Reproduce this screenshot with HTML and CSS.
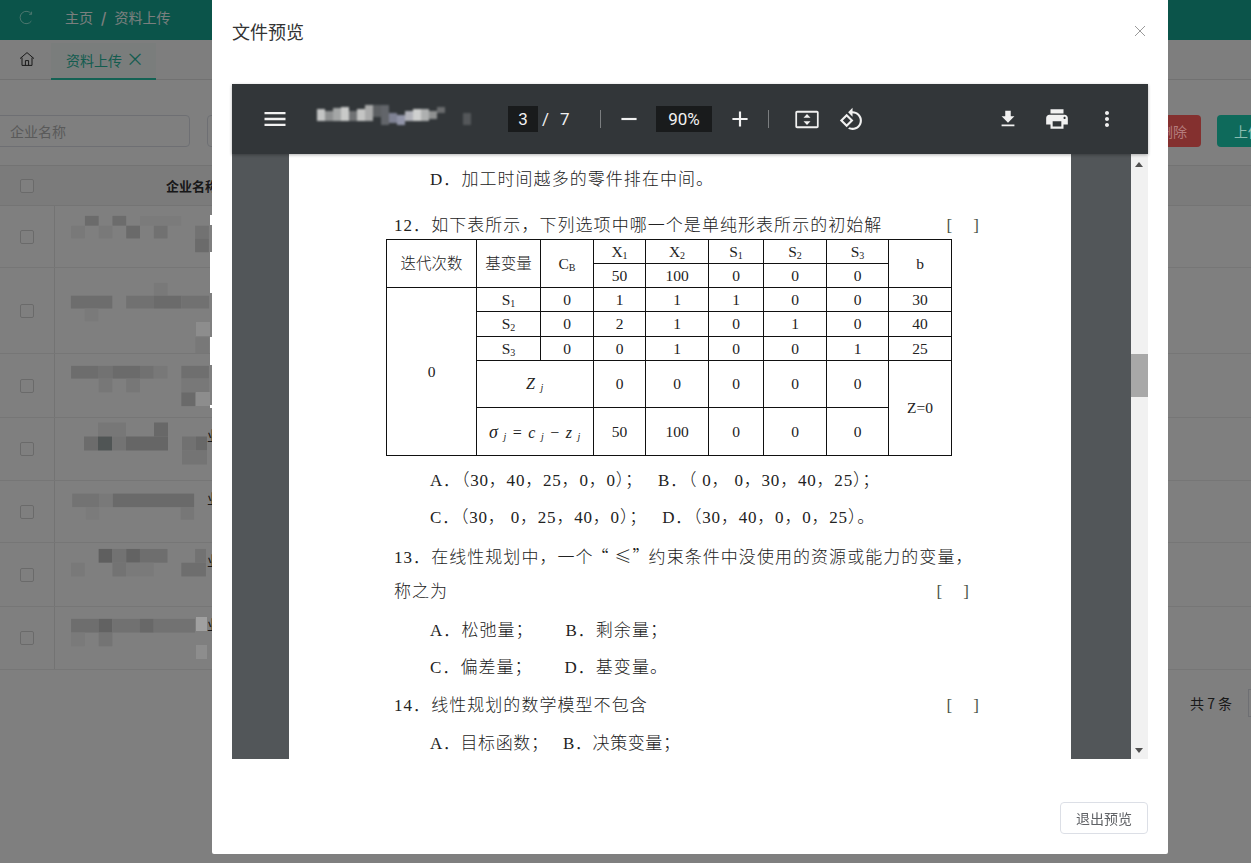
FILE: index.html
```html
<!DOCTYPE html>
<html lang="zh-CN">
<head>
  <meta charset="UTF-8">
  <title>资料上传</title>
  <link rel="stylesheet" href="styles.css">
</head>
<body>

  <!-- Page behind the dialog -->
  <div class="app">
    <header class="topbar">
      <svg class="refresh" viewBox="0 0 16 16"><path d="M13.2 4.2A6.6 6.6 0 1 0 13.2 11.8" fill="none" stroke="currentColor" stroke-width="1"/><path d="M13.4 1.8v2.8h-2.6" fill="none" stroke="currentColor" stroke-width="1"/></svg>
      <span class="crumb">主页</span>
      <span class="crumb-sep">/</span>
      <span class="crumb">资料上传</span>
    </header>

    <nav class="tabs">
      <svg class="home" viewBox="0 0 16 16"><path d="M1 7.6 8 1.6l7 6M3 6.6V14.4h10V6.6M6.4 14.4V9.6h3.2v4.8" fill="none" stroke="currentColor" stroke-width="1"/></svg>
      <div class="tab">资料上传<span class="tab-close">×</span></div>
    </nav>

    <div class="filters">
      <div class="field">企业名称</div>
      <div class="field field-next"></div>
      <div class="filter-btns">
        <div class="btn btn-red">删除</div>
        <div class="btn btn-green">上传</div>
      </div>
    </div>

    <div class="grid">
      <div class="grid-head">
        <div class="cell-check"><span class="check"></span></div>
        <div class="head-name">企业名称</div>
      </div>
      <!-- names are pixelated in the screenshot -->
      <div class="grid-row row-a">
        <div class="cell-check"><span class="check"></span></div>
        <svg class="mosaic" viewBox="0 0 140 62"><rect x="14" y="10" width="14" height="10" fill="#d6d6d6"/><rect x="42" y="10" width="14" height="10" fill="#d8d8d8"/><rect x="70" y="10" width="42" height="10" fill="#f6f6f6"/><rect y="20" width="14" height="13" fill="#f2f2f2"/><rect x="28" y="20" width="14" height="13" fill="#f2f2f2"/><rect x="56" y="20" width="14" height="13" fill="#d4d4d4"/><rect x="84" y="20" width="14" height="13" fill="#e2e2e2"/><rect x="126" y="20" width="14" height="13" fill="#e4e4e4"/><rect x="126" y="33" width="14" height="14" fill="#d6d6d6"/></svg>
      </div>
      <div class="grid-row row-b">
        <div class="cell-check"><span class="check"></span></div>
        <svg class="mosaic" viewBox="0 0 140 86"><rect x="84" y="15" width="14" height="13" fill="#f2f2f2"/><rect y="28" width="42" height="13" fill="#dadada"/><rect x="56" y="28" width="28" height="13" fill="#e2e2e2"/><rect x="84" y="28" width="28" height="13" fill="#d6d6d6"/><rect x="112" y="28" width="28" height="13" fill="#e2e2e2"/><rect x="14" y="41" width="14" height="13" fill="#f4f4f4"/><rect x="126" y="70" width="14" height="16" fill="#f0f0f0"/></svg>
      </div>
      <div class="grid-row row-c">
        <div class="cell-check"><span class="check"></span></div>
        <svg class="mosaic" viewBox="0 0 140 64"><rect y="12" width="28" height="13" fill="#dadada"/><rect x="28" y="12" width="14" height="13" fill="#e4e4e4"/><rect x="42" y="12" width="28" height="13" fill="#d6d6d6"/><rect x="70" y="12" width="14" height="13" fill="#e2e2e2"/><rect x="84" y="12" width="14" height="13" fill="#f0f0f0"/><rect x="112" y="12" width="28" height="13" fill="#dedede"/><rect x="28" y="25" width="14" height="14" fill="#eeeeee"/><rect x="56" y="25" width="14" height="14" fill="#eeeeee"/><rect x="112" y="25" width="28" height="14" fill="#f0f0f0"/><rect x="112" y="39" width="14" height="14" fill="#d4d4d4"/></svg>
      </div>
      <div class="grid-row row-d">
        <div class="cell-check"><span class="check"></span></div>
        <svg class="mosaic mosaic-cut" viewBox="0 0 137 61"><rect x="28" y="4" width="28" height="14" fill="#eeeeee"/><rect x="84" y="4" width="14" height="14" fill="#d0d0d0"/><rect x="14" y="18" width="14" height="14" fill="#d8d8d8"/><rect x="28" y="18" width="14" height="14" fill="#a0aaaa"/><rect x="42" y="18" width="14" height="14" fill="#e6e6e6"/><rect x="56" y="18" width="42" height="14" fill="#cccccc"/><rect x="112" y="18" width="14" height="14" fill="#e2e2e2"/><rect x="126" y="18" width="11" height="14" fill="#d0d0d0"/><rect x="112" y="32" width="25" height="14" fill="#e8e8e8"/></svg>
        <span class="name-tail">业</span>
      </div>
      <div class="grid-row row-e">
        <div class="cell-check"><span class="check"></span></div>
        <svg class="mosaic mosaic-cut" viewBox="0 0 137 63"><rect y="13" width="28" height="14" fill="#e6e6e6"/><rect x="28" y="13" width="14" height="14" fill="#f2f2f2"/><rect x="42" y="13" width="84" height="14" fill="#d4d4d4"/><rect x="14" y="27" width="14" height="13" fill="#f6f6f6"/><rect x="112" y="27" width="14" height="13" fill="#eeeeee"/></svg>
        <span class="name-tail">业</span>
      </div>
      <div class="grid-row row-f">
        <div class="cell-check"><span class="check"></span></div>
        <svg class="mosaic mosaic-cut" viewBox="0 0 137 64"><rect x="28" y="6" width="14" height="14" fill="#bebebe"/><rect x="42" y="6" width="14" height="14" fill="#e4e4e4"/><rect x="56" y="6" width="14" height="14" fill="#c6c6c6"/><rect x="70" y="6" width="28" height="14" fill="#dcdcdc"/><rect x="126" y="6" width="11" height="14" fill="#e4e4e4"/><rect y="20" width="14" height="14" fill="#f2f2f2"/><rect x="42" y="20" width="14" height="14" fill="#e6e6e6"/><rect x="56" y="20" width="28" height="14" fill="#f4f4f4"/><rect x="112" y="20" width="25" height="14" fill="#dcdcdc"/></svg>
        <span class="name-tail">业</span>
      </div>
      <div class="grid-row row-d">
        <div class="cell-check"><span class="check"></span></div>
        <svg class="mosaic mosaic-cut" viewBox="0 0 137 63"><rect y="12" width="28" height="14" fill="#dcdcdc"/><rect x="28" y="12" width="14" height="14" fill="#c4c4c4"/><rect x="42" y="12" width="28" height="14" fill="#e2e2e2"/><rect x="70" y="12" width="14" height="14" fill="#d0d0d0"/><rect x="84" y="12" width="42" height="14" fill="#e4e4e4"/><rect y="26" width="14" height="14" fill="#f4f4f4"/><rect x="28" y="26" width="14" height="14" fill="#e8e8e8"/></svg>
        <span class="name-tail">业</span>
      </div>
    </div>

    <div class="pager">
      <span>共 7 条</span>
      <span class="pager-box"></span>
    </div>
  </div>

  <!-- Bits of the redaction that are lighter than the dim layer -->
  <div class="bit sliver sliver-a"></div>
  <div class="bit sliver sliver-b"></div>
  <div class="bit sliver sliver-c"></div>
  <div class="bit sliver sliver-d"></div>
  <div class="bit patch patch-a"></div>
  <div class="bit patch patch-b"></div>
  <div class="bit patch patch-c"></div>
  <div class="bit patch patch-d"></div>

  <div class="mask"></div>

  <!-- Dialog: file preview -->
  <section class="dialog">
    <div class="dialog-head">
      <h2 class="dialog-title">文件预览</h2>
      <svg class="dialog-close" viewBox="0 0 12 12"><path d="M1 1l10 10M11 1L1 11" fill="none" stroke="currentColor" stroke-width="1"/></svg>
    </div>

    <div class="viewer">
      <div class="pdf-bar">
        <svg class="ico ico-menu" viewBox="0 0 24 24"><path d="M3 18h18v-2H3v2zm0-5h18v-2H3v2zm0-7v2h18V6H3z"/></svg>
        <svg class="pdf-name" viewBox="0 0 154 32"><rect x="0" y="6" width="8" height="12" fill="#c3c4c4"/><rect x="8" y="8" width="8" height="10" fill="#8d8f90"/><rect x="16" y="5" width="8" height="13" fill="#a4a6a6"/><rect x="24" y="4" width="8" height="14" fill="#c9cac9"/><rect x="32" y="8" width="8" height="10" fill="#707274"/><rect x="40" y="6" width="8" height="12" fill="#c4c5c4"/><rect x="48" y="2" width="8" height="16" fill="#a9aaaa"/><rect x="56" y="2" width="8" height="12" fill="#5c5f62"/><rect x="64" y="2" width="8" height="20" fill="#62656a"/><rect x="72" y="10" width="8" height="10" fill="#7f8294"/><rect x="80" y="12" width="8" height="10" fill="#9194a8"/><rect x="88" y="8" width="8" height="10" fill="#b0b1b8"/><rect x="96" y="6" width="8" height="12" fill="#cfd0cf"/><rect x="104" y="6" width="8" height="12" fill="#aeb0b0"/><rect x="112" y="8" width="8" height="8" fill="#8e9090"/><rect x="120" y="4" width="8" height="6" fill="#6a6c6e"/><rect x="146" y="10" width="8" height="12" fill="#54575a"/></svg>
        <span class="num-box page-box">3</span>
        <span class="page-of">/</span>
        <span class="page-total">7</span>
        <span class="bar-sep sep-one"></span>
        <svg class="ico ico-minus" viewBox="0 0 24 24"><path d="M5 11h14v2H5z"/></svg>
        <span class="num-box zoom-box">90%</span>
        <svg class="ico ico-plus" viewBox="0 0 24 24"><path d="M19 13h-6v6h-2v-6H5v-2h6V5h2v6h6v2z"/></svg>
        <span class="bar-sep sep-two"></span>
        <svg class="ico ico-fit" viewBox="0 0 24 24"><path d="M3.5 5h17c.8 0 1.500.7 1.500 1.500v12c0 .8-.7 1.500-1.500 1.500h-17C2.700 20 2 19.300 2 18.500v-12C2 5.700 2.700 5 3.500 5zm0 1.700v11.600h17V6.700h-17zM12 7.800l3 3.200H9l3-3.200zm0 9.400L9 14h6l-3 3.200z"/></svg>
        <svg class="ico ico-rotate" viewBox="0 0 24 24"><path d="M7.340 6.410L.86 12.900l6.490 6.480 6.490-6.480-6.500-6.490zM3.690 12.900l3.660-3.660L11 12.900l-3.660 3.660-3.650-3.660zm15.670-6.260C17.610 4.880 15.300 4 13 4V.76L8.760 5 13 9.240V6c1.790 0 3.580.68 4.950 2.050 2.730 2.730 2.730 7.170 0 9.900C16.580 19.320 14.790 20 13 20c-.97 0-1.940-.21-2.840-.61l-1.490 1.490C10.020 21.620 11.510 22 13 22c2.300 0 4.610-.88 6.360-2.640 3.520-3.510 3.520-9.210 0-12.720z"/></svg>
        <span class="bar-fill"></span>
        <svg class="ico ico-down" viewBox="0 0 24 24"><path d="M19 9h-4V3H9v6H5l7 7 7-7zM5 18v2h14v-2H5z"/></svg>
        <svg class="ico ico-print" viewBox="0 0 24 24"><path d="M19 8H5c-1.660 0-3 1.340-3 3v6h4v4h12v-4h4v-6c0-1.660-1.340-3-3-3zm-3 11H8v-5h8v5zm3-7c-.55 0-1-.45-1-1s.45-1 1-1 1 .45 1 1-.45 1-1 1zm-1-9H6v4h12V3z"/></svg>
        <svg class="ico ico-more" viewBox="0 0 24 24"><path d="M12 8c1.100 0 2-.9 2-2s-.9-2-2-2-2 .9-2 2 .9 2 2 2zm0 2c-1.100 0-2 .9-2 2s.9 2 2 2 2-.9 2-2-.9-2-2-2zm0 6c-1.100 0-2 .9-2 2s.9 2 2 2 2-.9 2-2-.9-2-2-2z"/></svg>
      </div>

      <div class="pdf-body">
        <div class="pdf-gutter">
          <article class="pdf-page">
            <p class="line opt first">D．加工时间越多的零件排在中间。</p>
            <p class="line q q12"><span>12．如下表所示，下列选项中哪一个是单纯形表所示的初始解</span><span class="blank">[&nbsp;&nbsp;&nbsp;&nbsp;&nbsp;]</span></p>

            <table class="sheet">
              <colgroup>
                <col class="c1"><col class="c2"><col class="c3"><col class="c4"><col class="c5">
                <col class="c6"><col class="c7"><col class="c8"><col class="c9">
              </colgroup>
              <tr class="r24">
                <td rowspan="2">迭代次数</td><td rowspan="2">基变量</td><td rowspan="2">C<sub>B</sub></td>
                <td>X<sub>1</sub></td><td>X<sub>2</sub></td><td>S<sub>1</sub></td><td>S<sub>2</sub></td><td>S<sub>3</sub></td>
                <td rowspan="2">b</td>
              </tr>
              <tr class="r24"><td>50</td><td>100</td><td>0</td><td>0</td><td>0</td></tr>
              <tr class="r24">
                <td rowspan="5">0</td><td>S<sub>1</sub></td><td>0</td><td>1</td><td>1</td><td>1</td><td>0</td><td>0</td><td>30</td>
              </tr>
              <tr class="r25"><td>S<sub>2</sub></td><td>0</td><td>2</td><td>1</td><td>0</td><td>1</td><td>0</td><td>40</td></tr>
              <tr class="r24"><td>S<sub>3</sub></td><td>0</td><td>0</td><td>1</td><td>0</td><td>0</td><td>1</td><td>25</td></tr>
              <tr class="r47">
                <td colspan="2" class="math">Z <sub>j</sub></td><td>0</td><td>0</td><td>0</td><td>0</td><td>0</td>
                <td rowspan="2">Z=0</td>
              </tr>
              <tr class="r48">
                <td colspan="2" class="math"><b>σ</b> <sub>j</sub> = c <sub>j</sub> − z <sub>j</sub></td><td>50</td><td>100</td><td>0</td><td>0</td><td>0</td>
              </tr>
            </table>

            <p class="line opt nums after-sheet">A．（30，40，25，0，0）；&nbsp;&nbsp; B．（ 0， 0，30，40，25）；</p>
            <p class="line opt nums">C．（30， 0，25，40，0）；&nbsp;&nbsp; D．（30，40，0，0，25）。</p>
            <p class="line q q13">13．在线性规划中，一个<span class="cjk">“ ≤”</span>约束条件中没使用的资源或能力的变量，</p>
            <p class="line q q13b"><span>称之为</span><span class="blank blank-13">[&nbsp;&nbsp;&nbsp;&nbsp;&nbsp;]</span></p>
            <p class="line opt tall">A．松弛量；&nbsp;&nbsp;&nbsp;&nbsp;&nbsp; B．剩余量；</p>
            <p class="line opt">C．偏差量；&nbsp;&nbsp;&nbsp;&nbsp;&nbsp; D．基变量。</p>
            <p class="line q q14"><span>14．线性规划的数学模型不包含</span><span class="blank">[&nbsp;&nbsp;&nbsp;&nbsp;&nbsp;]</span></p>
            <p class="line opt q14b">A．目标函数；&nbsp;&nbsp; B．决策变量；</p>
          </article>
        </div>
        <div class="pdf-scroll">
          <span class="arrow arrow-up"></span>
          <span class="thumb"></span>
          <span class="arrow arrow-down"></span>
        </div>
      </div>
    </div>

    <div class="dialog-foot">
      <div class="btn-exit">退出预览</div>
    </div>
  </section>

</body>
</html>
```

FILE: styles.css
```css
/* Base */
html, body {
  margin: 0;
  height: 100%;
  overflow: hidden;
}

body {
  font-family: 'Noto Sans CJK SC', 'Liberation Sans', sans-serif;
  font-size: 14px;
  color: #606266;
  background-color: #fff;
}

/* Page behind the dialog */
.app {
  width: 1300px;
  height: 863px;
}

.topbar {
  height: 40px;
  background-color: #16a894;
  display: flex;
  align-items: center;
  gap: 8px;
  padding-left: 19px;
  padding-bottom: 6px;
  box-sizing: border-box;
}

.refresh {
  width: 15px;
  height: 15px;
  margin-right: 23px;
  color: #a0f0e0;
}

.crumb {
  color: #f4fffd;
}

.crumb-sep {
  color: #fff;
  font-weight: bold;
}

.tabs {
  height: 39px;
  border-bottom: 1px solid #e2e2e2;
  display: flex;
  align-items: flex-end;
  background-color: #fcfcfc;
}

.home {
  width: 16px;
  height: 16px;
  margin: 0 16px 12px 19px;
  color: #333;
}

.tab {
  width: 105px;
  height: 37px;
  box-sizing: border-box;
  padding: 4px 0 0 15px;
  border-bottom: 2px solid #28c4a8;
  background-color: #f4fbf9;
  color: #28b89e;
  line-height: 26px;
  margin-bottom: -1px;
}

.tab-close {
  font-size: 18px;
  margin-left: 4px;
  line-height: 16px;
}

.filters {
  display: flex;
  align-items: center;
  padding-top: 35px;
  margin-left: -12px;
  height: 32px;
  padding-bottom: 18px;
  border-bottom: 1px solid #e6e6e6;
}

.field {
  width: 202px;
  height: 32px;
  flex-shrink: 0;
  box-sizing: border-box;
  border: 1px solid #dcdfe6;
  border-radius: 4px;
  padding-left: 21px;
  line-height: 30px;
  color: #b4b4b4;
}

.field-next {
  margin-left: 17px;
}

.filter-btns {
  display: flex;
  gap: 16px;
  margin-left: 720px;
  flex-shrink: 0;
}

/* these two stay brighter than the dim layer would leave them */
.btn {
  width: 72px;
  height: 32px;
  box-sizing: border-box;
  border-radius: 4px;
  line-height: 32px;
  flex-shrink: 0;
  position: relative;
  z-index: 3;
}

.btn-red {
  background-color: #84302f;
  color: #b57d7d;
  padding-left: 30px;
}

.btn-green {
  background-color: #0e6a5b;
  color: #8cbcb0;
  padding-left: 17px;
}

/* Table */
.grid {
  width: 1251px;
  background-color: #fff;
}

.grid-head {
  height: 39px;
  display: flex;
  align-items: center;
  border-bottom: 1px solid #e8e8e8;
  background-color: #f7f7f7;
}

.cell-check {
  width: 54px;
  height: 100%;
  display: flex;
  align-items: center;
  justify-content: center;
  flex-shrink: 0;
  border-right: 1px solid #e6e6e6;
}

.grid-head .cell-check {
  border-right: none;
}

.check {
  width: 12px;
  height: 12px;
  border: 1px solid #d5d5d5;
  border-radius: 2px;
  background-color: #fff;
}

.head-name {
  margin-left: 112px;
  font-weight: bold;
  color: #303133;
  font-size: 13px;
  white-space: nowrap;
}

.grid-row {
  display: flex;
  border-bottom: 1px solid #ececec;
  box-sizing: border-box;
}

.row-a { height: 62px; }
.row-b { height: 86px; }
.row-c { height: 64px; }
.row-d { height: 63px; }
.row-e { height: 62px; }
.row-f { height: 64px; }

.mosaic {
  width: 140px;
  height: 100%;
  margin-left: 15px;
  flex-shrink: 0;
  filter: blur(0.5px);
}

.mosaic-cut {
  width: 137px;
}

.name-tail {
  margin-top: 9px;
  line-height: 16px;
  height: 16px;
  color: #303133;
}

.pager {
  display: flex;
  align-items: center;
  height: 30px;
  margin-top: 18px;
  padding-left: 1190px;
  gap: 16px;
  width: 110px;
  color: #333;
  white-space: nowrap;
}

.pager-box {
  width: 30px;
  height: 26px;
  border: 1px solid #dcdfe6;
  flex-shrink: 0;
}

/* Redaction bits */
.bit {
  position: fixed;
  z-index: 3;
}

.sliver {
  left: 210px;
  width: 2px;
  background-color: #fff;
}

.sliver-a { top: 215px; height: 10px; }
.sliver-b { top: 252px; height: 41px; }
.sliver-c { top: 337px; height: 28px; }
.sliver-d { top: 405px; height: 3px; }

.patch {
  left: 196px;
  width: 14px;
  height: 14px;
  background-color: #8d8d8d;
}

.patch-a { top: 322px; }
.patch-b { top: 392px; }
.patch-c { top: 617px; width: 11px; background-color: #a0a0a0; }
.patch-d { top: 645px; width: 11px; }

/* Dimmed layer */
.mask {
  position: fixed;
  inset: 0;
  background-color: rgba(0, 0, 0, 0.5);
  z-index: 2;
}

/* Dialog */
.dialog {
  position: fixed;
  left: 212px;
  top: 0;
  width: 956px;
  height: 854px;
  box-sizing: border-box;
  padding: 0 20px;
  background-color: #fff;
  border-radius: 0 0 2px 2px;
  z-index: 4;
  display: flex;
  flex-direction: column;
}

.dialog-head {
  height: 84px;
  display: flex;
  justify-content: space-between;
  flex-shrink: 0;
}

.dialog-title {
  margin: 19px 0 0;
  font-size: 18px;
  font-weight: normal;
  line-height: 24px;
  color: #333;
}

.dialog-close {
  width: 12px;
  height: 12px;
  margin-top: 25px;
  margin-right: 2px;
  color: #9a9a9a;
}

.viewer {
  height: 675px;
  display: flex;
  flex-direction: column;
  flex-shrink: 0;
}

/* PDF toolbar */
.pdf-bar {
  height: 70px;
  flex-shrink: 0;
  background-color: #323639;
  display: flex;
  align-items: center;
  padding-left: 29px;
  color: #f1f1f1;
  font-family: 'Roboto', sans-serif;
  font-size: 17px;
  box-shadow: 0 1px 3px rgba(0, 0, 0, 0.3);
  position: relative;
  z-index: 1;
}

.ico {
  fill: #f1f1f1;
  flex-shrink: 0;
}

.ico-menu { width: 28px; height: 28px; }

.pdf-name {
  width: 154px;
  height: 32px;
  margin-left: 28px;
  flex-shrink: 0;
  filter: blur(0.8px);
}

.num-box {
  height: 26px;
  line-height: 26px;
  background-color: #191b1c;
  text-align: center;
  flex-shrink: 0;
}

.page-box { width: 30px; margin-left: 37px; }
.page-of { margin-left: 4px; width: 9px; flex-shrink: 0; }
.page-total { margin-left: 9px; width: 10px; flex-shrink: 0; }

.bar-sep {
  width: 1px;
  height: 18px;
  background-color: #7b7e80;
  flex-shrink: 0;
}

.sep-one { margin-left: 30px; }
.ico-minus { width: 26px; height: 26px; margin-left: 15px; }
.zoom-box { width: 56px; margin-left: 14px; }
.ico-plus { width: 26px; height: 26px; margin-left: 15px; }
.sep-two { margin-left: 15px; }
.ico-fit { width: 28px; height: 28px; margin-left: 24px; }
.ico-rotate { width: 25px; height: 25px; margin-left: 18px; }
.bar-fill { flex: 1; }
.ico-down { width: 22px; height: 22px; }
.ico-print { width: 26px; height: 26px; margin-left: 25px; }
.ico-more { width: 24px; height: 24px; margin-left: 25px; margin-right: 29px; }

/* PDF content */
.pdf-body {
  flex: 1;
  display: flex;
  min-height: 0;
}

.pdf-gutter {
  flex: 1;
  background-color: #525659;
  padding: 0 60px 0 57px;
  overflow: hidden;
}

.pdf-page {
  background-color: #fff;
  height: 640px;
  padding: 0 0 0 105px;
  font-family: 'Liberation Serif', 'Noto Sans CJK SC', serif;
  font-size: 17px;
  font-weight: 300;
  color: #222;
  overflow: hidden;
}

.line {
  margin: 0;
  height: 37px;
  line-height: 37px;
  white-space: nowrap;
  letter-spacing: 1.05px;
}

.first { margin-top: 7px; }

.opt { padding-left: 36px; }

.nums { letter-spacing: 0.8px; }

.q {
  display: flex;
  justify-content: space-between;
  width: 590px;
}

.q12 { margin-top: 9px; margin-bottom: -1px; height: 33px; }
.q13 { margin-top: 1px; display: block; }
.q13b { margin-top: -1px; }
.q14 { margin-top: 1px; }
.q14b { margin-top: 1px; letter-spacing: 0.6px; }

.cjk {
  font-family: 'Noto Sans CJK SC', sans-serif;
  margin: 0 -2px;
}

.blank {
  color: #4a554a;
  margin-right: 5px;
  letter-spacing: 0;
}

.blank-13 { margin-right: 15px; }

.tall { margin-top: 2px; }

.after-sheet { margin-top: 6px; }

/* Simplex table */
.sheet {
  border-collapse: collapse;
  table-layout: fixed;
  width: 566px;
  margin-left: -8px;
  font-size: 15.5px;
  color: #222;
}

.sheet td {
  border: 1.5px solid #111;
  padding: 0;
  text-align: center;
  line-height: 1;
}

.sheet sub {
  font-size: 10px;
  vertical-align: -2px;
  line-height: 0;
}

.math {
  font-style: italic;
  font-size: 16px;
  letter-spacing: 0.8px;
}

.math b { font-weight: normal; font-size: 18px; }

.c1 { width: 90px; }
.c2 { width: 64px; }
.c3 { width: 53px; }
.c4 { width: 52px; }
.c5 { width: 63px; }
.c6 { width: 55px; }
.c7 { width: 63px; }
.c8 { width: 62px; }
.c9 { width: 63px; }

.r24 { height: 24px; }
.r25 { height: 25px; }
.r47 { height: 47px; }
.r48 { height: 48px; }

/* Scrollbar of the PDF frame */
.pdf-scroll {
  width: 17px;
  flex-shrink: 0;
  background-color: #f1f1f1;
  position: relative;
}

.arrow {
  position: absolute;
  left: 4px;
  width: 0;
  height: 0;
  border-left: 4.5px solid transparent;
  border-right: 4.5px solid transparent;
}

.arrow-up {
  top: 8px;
  border-bottom: 5px solid #505050;
}

.arrow-down {
  bottom: 6px;
  border-top: 5px solid #505050;
}

.thumb {
  position: absolute;
  left: 0;
  right: 0;
  top: 200px;
  height: 43px;
  background-color: #a8a8a8;
}

/* Dialog footer */
.dialog-foot {
  flex: 1;
  display: flex;
  justify-content: flex-end;
  padding-top: 43px;
}

.btn-exit {
  width: 88px;
  height: 32px;
  box-sizing: border-box;
  border: 1px solid #dcdfe6;
  border-radius: 4px;
  text-align: center;
  line-height: 30px;
  color: #606266;
}
```
